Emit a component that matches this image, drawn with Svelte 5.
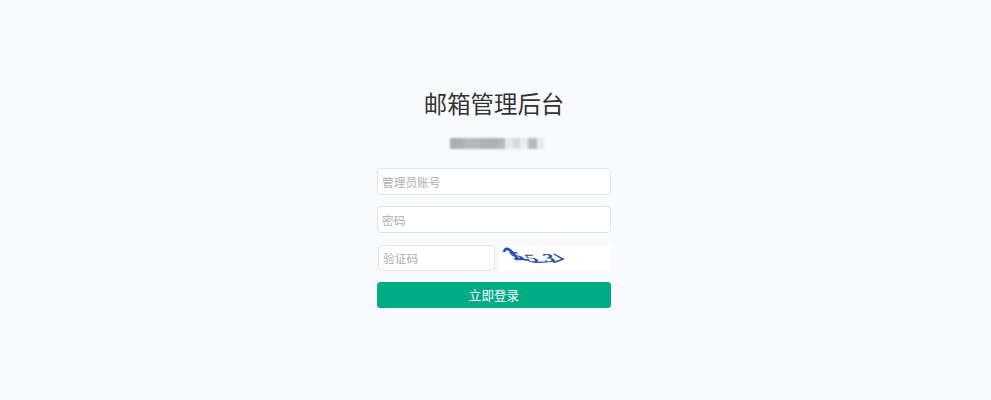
<script>
  let account = $state('');
  let password = $state('');
  let code = $state('');

  // blurred subtitle: the reference has it pixelated, so it is drawn as tinted blocks
  const blocks = [
    { w: 14, o: 0.72 },
    { w: 16, o: 0.62 },
    { w: 17, o: 0.7 },
    { w: 8, o: 0.62 },
    { w: 8, o: 0.15 },
    { w: 7, o: 0.3 },
    { w: 8, o: 0.12 },
    { w: 9, o: 0.6 },
    { w: 7, o: 0.14 },
  ];
</script>

<main class="page">
  <form class="login" onsubmit={(e) => e.preventDefault()}>
    <h1>邮箱管理后台</h1>
    <div class="subtitle" aria-hidden="true">
      {#each blocks as b}
        <span style="width:{b.w}px;opacity:{b.o}"></span>
      {/each}
    </div>
    <input type="text" placeholder="管理员账号" bind:value={account} />
    <input type="password" placeholder="密码" bind:value={password} />
    <div class="captcha-row">
      <input class="code" type="text" placeholder="验证码" bind:value={code} />
      <div class="captcha">
        <svg width="112" height="26" viewBox="0 0 112 26">
          <g fill="#2450a8" font-family="Liberation Serif, serif" font-weight="700" font-size="15">
            <text transform="translate(15 15) skewX(42) scale(1.6 0.8)">5</text>
            <text transform="translate(30 17) skewX(40) scale(1.5 0.75)">5</text>
            <text transform="translate(46 17) skewX(25) scale(1.5 0.8)">3</text>
          </g>
          <g fill="none" stroke="#2450a8">
            <path d="M5 7 C6 3 9 3 12 6 L19 14" stroke-width="2.6" />
            <path d="M16 14 C21 13 25 15 30 15" stroke-width="1.6" />
            <path d="M33 17 C38 18 43 17 48 17" stroke-width="1.2" />
            <path d="M55 9 C58 11 62 13 64 14 C60 16 57 17 54 17" stroke-width="1.4" />
          </g>
        </svg>
      </div>
    </div>
    <button type="submit"><span>立即登录</span></button>
  </form>
</main>

<style>
  :global(body) {
    margin: 0;
    background: #f9fafc;
  }

  .page {
    height: 400px;
    display: flex;
    justify-content: center;
    font-family: "Noto Sans CJK SC", "Noto Sans", sans-serif;
  }

  .login {
    width: 234px;
    margin-left: -3px;
    padding-top: 86px;
    display: flex;
    flex-direction: column;
  }

  h1 {
    margin: 0;
    font-size: 23.4px;
    line-height: 34px;
    font-weight: 400;
    text-align: center;
    color: #333;
    white-space: nowrap;
  }

  .subtitle {
    display: flex;
    justify-content: center;
    height: 11px;
    margin: 18px 0 19px 6px;
    filter: blur(1.2px);
  }

  .subtitle span {
    height: 11px;
    background: #8f8f8f;
  }

  input {
    box-sizing: border-box;
    width: 100%;
    height: 27px;
    padding: 0 4px;
    margin-bottom: 11px;
    border: 1px solid #e2e4e8;
    border-radius: 4px;
    background: #fff;
    font-family: inherit;
    font-size: 11.7px;
    color: #555;
    outline: none;
  }

  input::placeholder {
    color: #aeaeae;
    opacity: 1;
  }

  .captcha-row {
    display: flex;
    gap: 4px;
    padding-left: 1px;
    margin-top: 1px;
    margin-bottom: 11px;
  }

  .code {
    width: 117px;
    height: 26px;
    margin-bottom: 0;
    padding-top: 0;
    padding-bottom: 2px;
  }

  .captcha {
    flex: 1;
    height: 26px;
    background: #fff;
  }

  .captcha svg {
    display: block;
  }

  button {
    height: 26px;
    padding: 0 0 2px;
    border: 1px solid #00ab85;
    border-radius: 3px;
    background: #00ab85;
    color: #fff;
    font-family: inherit;
    font-size: 12.6px;
    cursor: pointer;
  }
</style>
